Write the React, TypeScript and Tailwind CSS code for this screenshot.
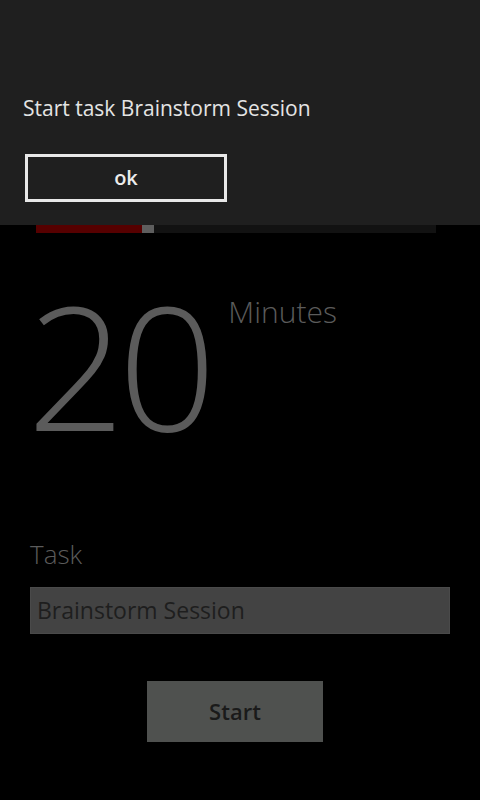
export default function App() {
  return (
    <div
      className="relative h-[800px] w-[480px] overflow-hidden bg-black"
      style={{ fontFamily: '"Open Sans", "Noto Sans", sans-serif' }}
    >
      {/* message box */}
      <div className="h-[225px] bg-[#1f1f1f] pl-[23px] pt-[94px]">
        <p className="text-[21px] leading-[28px] text-[#e4e4e4]">Start task Brainstorm Session</p>
        <button className="mt-[32px] ml-[2px] flex h-[48px] w-[202px] items-center justify-center border-[3px] border-[#e8e8e8] text-[20px] font-semibold text-[#ececec]">
          ok
        </button>
      </div>

      {/* progress */}
      <div className="ml-[36px] flex h-[8px] w-[400px] bg-[#121212]">
        <div className="h-full w-[106px] bg-[#560000]" />
        <div className="h-full w-[12px] bg-[#5e5e5e]" />
      </div>

      {/* minutes */}
      <div className="flex pl-[27px] pt-[45px]">
        <span className="text-[172px] font-light leading-[172px] tracking-[-7px] text-[#5b5b5b]">20</span>
        <span className="ml-[19px] mt-[14px] text-[30px] font-light leading-[40px] text-[#5b5b5b]">Minutes</span>
      </div>

      {/* task */}
      <div className="px-[30px] pt-[88px]">
        <p className="text-[26px] font-light leading-[32px] text-[#5b5b5b]">Task</p>
        <div className="mt-[17px] flex h-[47px] items-center border border-[#4a4a4a] bg-[#434343] px-[6px]">
          <span className="text-[23px] text-[#1e1e1e]">Brainstorm Session</span>
        </div>
      </div>

      <div className="flex justify-center pt-[47px]">
        <button className="ml-[-10px] flex h-[61px] w-[176px] items-center justify-center bg-[#4f514f] text-[22px] font-semibold text-[#1a1a1a]">
          Start
        </button>
      </div>
    </div>
  );
}
